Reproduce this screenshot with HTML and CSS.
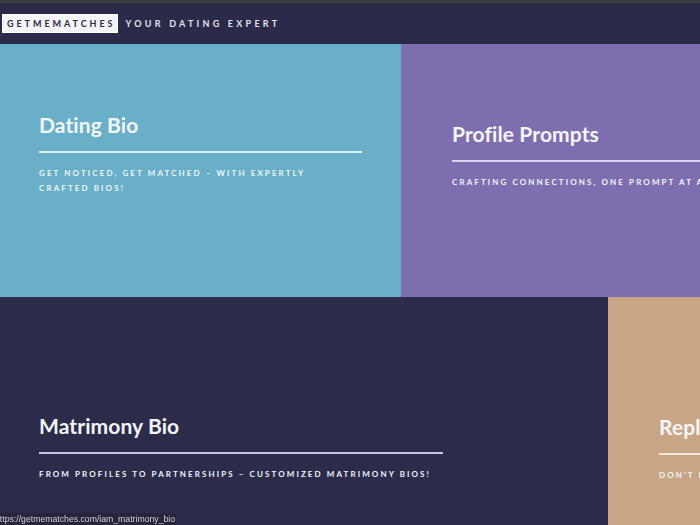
FILE: index.html
```html
<!DOCTYPE html>
<html>
<head>
<meta charset="utf-8">
<link rel="stylesheet" href="styles.css">
</head>
<body>
<div class="topstrip"></div>
<header class="header">
  <span class="logo">GETMEMATCHES</span>
  <span class="tagline">YOUR DATING EXPERT</span>
</header>
<main class="tiles">
  <div class="row row-top">
    <a class="tile tile-blue">
      <div class="content c1">
        <h2 class="title">Dating Bio</h2>
        <div class="rule"></div>
        <p class="sub">GET NOTICED, GET MATCHED – WITH EXPERTLY CRAFTED BIOS!</p>
      </div>
    </a>
    <a class="tile tile-purple">
      <div class="content c2">
        <h2 class="title">Profile Prompts</h2>
        <div class="rule"></div>
        <p class="sub nowrap">CRAFTING CONNECTIONS, ONE PROMPT AT A TIME</p>
      </div>
    </a>
  </div>
  <div class="row row-bottom">
    <a class="tile tile-dark">
      <div class="content c3">
        <h2 class="title">Matrimony Bio</h2>
        <div class="rule"></div>
        <p class="sub nowrap">FROM PROFILES TO PARTNERSHIPS – CUSTOMIZED MATRIMONY BIOS!</p>
      </div>
    </a>
    <a class="tile tile-tan">
      <div class="content c4">
        <h2 class="title nowrap">Reply Assist</h2>
        <div class="rule"></div>
        <p class="sub nowrap">DON'T KNOW WHAT TO SAY NEXT?</p>
      </div>
    </a>
  </div>
</main>
<div class="status"><span>https://getmematches.com/iam_matrimony_bio</span></div>
</body>
</html>
```
FILE: styles.css
```css
html, body {
  margin: 0;
  padding: 0;
  height: 100%;
  overflow: hidden;
  background: #2c2b4a;
  font-family: Lato, "Open Sans", sans-serif;
}
.topstrip {
  height: 3px;
  background: #3d3b42;
}
.header {
  height: 41px;
  background: #2b2a48;
  display: flex;
  align-items: center;
  padding-left: 3px;
  gap: 9px;
}
.logo {
  background: #f4f4f6;
  color: #2b2a48;
  font-weight: 700;
  font-size: 9px;
  letter-spacing: 2.95px;
  height: 17px;
  line-height: 17px;
  padding: 0 1px 0 4px;
  box-shadow: 0 0 0 1px #fff;
}
.tagline {
  color: #e4e4f0;
  font-weight: 700;
  font-size: 9px;
  letter-spacing: 3.25px;
}
.tiles {
  display: flex;
  flex-direction: column;
}
.row {
  display: grid;
  overflow: hidden;
}
.row-top {
  grid-template-columns: 401px 1fr;
  height: 253px;
}
.row-bottom {
  grid-template-columns: 608px 1fr;
  height: 240px;
}
.tile {
  display: flex;
  flex-direction: column;
  overflow: hidden;
  color: #f3f6f8;
}
.tile-blue { background: #69afc7; padding: 68px 39px 0; }
.tile-purple { background: #7e6eb0; padding: 77px 0 0 51px; }
.tile-dark { background: #2c2b4a; padding: 116px 39px 0; }
.tile-tan { background: #c8a585; padding: 117px 0 0 51px; }
.title {
  margin: 0;
  font-weight: 700;
  font-size: 21px;
  line-height: 26px;
  letter-spacing: 0.1px;
}
.rule {
  height: 2px;
  margin-top: 13px;
  background: #e9f4f8;
}
.c1 .rule { background: #dcf0f7; width: 323px; }
.c2 .rule { background: #dcd4ef; width: 300px; }
.c3 .rule { background: #c9c7e6; width: 404px; }
.c4 .rule { background: #f3e6da; width: 60px; }
.sub {
  margin: 13px 0 0;
  font-size: 8px;
  font-weight: 700;
  letter-spacing: 2.1px;
  line-height: 15px;
  color: #eef6fa;
}
.c1 .sub { width: 300px; }
.nowrap { white-space: nowrap; }
.status {
  position: fixed;
  left: 0;
  bottom: 0;
  width: 176px;
  height: 12px;
  background: #26253c;
  overflow: hidden;
  border-top-right-radius: 2px;
}
.status span {
  display: block;
  margin-left: -5px;
  font-family: "Liberation Sans", Arial, sans-serif;
  font-size: 8.7px;
  line-height: 12px;
  color: #cfcfd8;
  white-space: nowrap;
}
```
